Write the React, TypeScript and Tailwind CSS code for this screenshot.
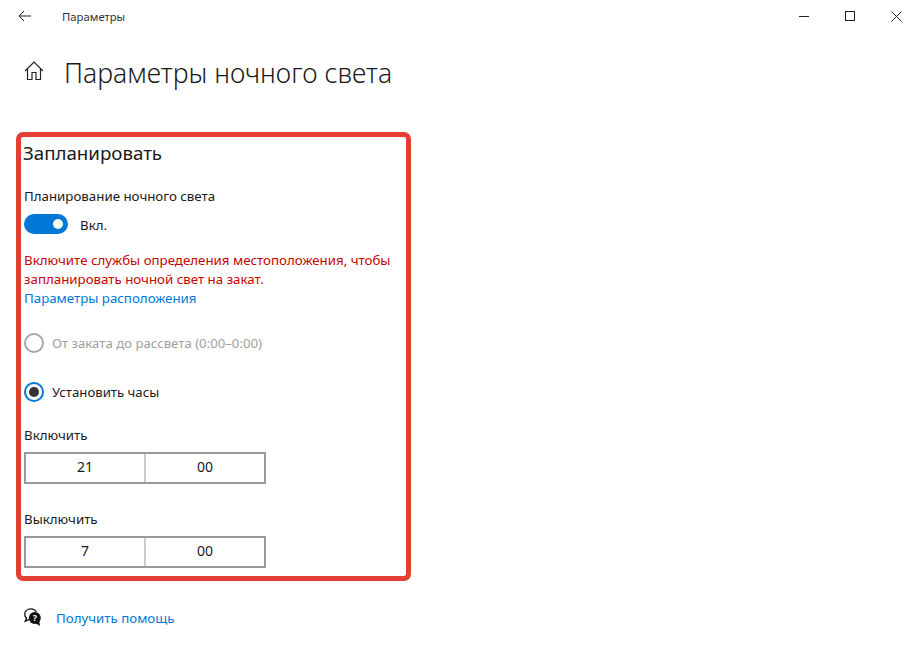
const font = { fontFamily: '"Noto Sans", "Open Sans", sans-serif' };

function TimeBox({ h }: { h: string }) {
  return (
    <div className="flex h-[32px] w-[242px] border-2 border-[#999999] text-[14px] leading-[26px] text-[#1a1a1a]">
      <div className="w-[118px] text-center">{h}</div>
      <div className="w-[2px] bg-[#cccccc]" />
      <div className="flex-1 text-center">00</div>
    </div>
  );
}

function Radio({ on, label }: { on?: boolean; label: string }) {
  return (
    <div className="flex h-[20px] items-center gap-[8px]">
      <div className={`flex h-[20px] w-[20px] items-center justify-center rounded-full border-2 ${on ? "border-[#0078d7]" : "border-[#a6a6a6]"}`}>
        {on && <div className="h-[10px] w-[10px] rounded-full bg-[#333333]" />}
      </div>
      <span className={`mt-[2px] text-[13.2px] ${on ? "text-[#1a1a1a]" : "text-[#a0a0a0]"}`}>{label}</span>
    </div>
  );
}

export default function App() {
  return (
    <div style={font} className="flex h-[662px] w-[919px] flex-col overflow-hidden bg-white text-black">
      <div className="flex h-[32px] items-center justify-between">
        <div className="flex items-center">
          <svg width="13" height="12" viewBox="0 0 13 12" className="ml-[18px]" fill="none" stroke="#222" strokeWidth="1">
            <path d="M13 6H1M6 1L1 6l5 5" />
          </svg>
          <span className="ml-[31px] mt-[3px] text-[11.3px] text-[#333333]">Параметры</span>
        </div>
        <div className="flex items-center">
          <div className="h-px w-[10px] bg-[#222]" />
          <div className="ml-[36px] h-[10px] w-[10px] border border-[#222]" />
          <svg width="11" height="11" viewBox="0 0 11 11" className="ml-[36px] mr-[17px]" stroke="#222" strokeWidth="1">
            <path d="M.5.5l10 10M10.5.5l-10 10" />
          </svg>
        </div>
      </div>

      <div className="mt-[19px] flex h-[40px] items-center">
        <svg width="20" height="20" viewBox="0 0 20 20" className="ml-[24px]" fill="none" stroke="#222" strokeWidth="1.2">
          <path d="M1 10L10 1l9 9M3.5 8v10.5H8v-7h4v7h4.5V8" />
        </svg>
        <h1 className="ml-[20px] mt-[5px] text-[26.6px] font-light text-[#1a1a1a]">Параметры ночного света</h1>
      </div>

      <div className="ml-[16px] mt-[41px] flex h-[449px] w-[395px] flex-col rounded-[7px] border-[5px] border-[#e53e33] pl-[3px]">
        <h2 className="mt-[3px] ml-[-1px] text-[18.7px] leading-[26px] text-[#1a1a1a]">Запланировать</h2>
        <div className="mt-[20px] text-[13.3px] leading-[20px] text-[#1a1a1a]">Планирование ночного света</div>
        <div className="mt-[8px] flex h-[20px] items-center">
          <div className="flex h-[20px] w-[44px] items-center justify-end rounded-full bg-[#0078d7] pr-[5px]">
            <div className="h-[10px] w-[10px] rounded-full bg-white" />
          </div>
          <span className="ml-[12px] mt-[3px] text-[13.3px] text-[#1a1a1a]">Вкл.</span>
        </div>
        <p className="mt-[17px] text-[13.3px] leading-[19px] text-[#c50500]">
          Включите службы определения местоположения, чтобы<br />запланировать ночной свет на закат.
        </p>
        <div className="text-[13.3px] leading-[19px] text-[#0078d7]">Параметры расположения</div>
        <div className="mt-[25px]"><Radio label="От заката до рассвета (0:00–0:00)" /></div>
        <div className="mt-[29px]"><Radio on label="Установить часы" /></div>
        <div className="mt-[23px] text-[13.3px] leading-[20px] text-[#1a1a1a]">Включить</div>
        <div className="mt-[7px]"><TimeBox h="21" /></div>
        <div className="mt-[25px] text-[13.3px] leading-[20px] text-[#1a1a1a]">Выключить</div>
        <div className="mt-[7px]"><TimeBox h="7" /></div>
      </div>

      <div className="ml-[24px] mt-[27px] flex h-[20px] items-center">
        <svg width="17" height="18" viewBox="0 0 17 18" className="mt-[-2px]">
          <path d="M12.4 4C11.4 2 9.3.8 6.8.8 3.3.8.7 3.2.7 6.2c0 1.5.7 2.9 1.8 3.9l-1.3 3.2 4-1.9" fill="none" stroke="#111" strokeWidth="1.3" />
          <circle cx="10.8" cy="10" r="6" fill="#111" />
          <path d="M12 15.5l4 2.5-.8-5z" fill="#111" />
          <text x="10.8" y="13.2" fontSize="9" fontWeight="700" fill="#fff" textAnchor="middle">?</text>
        </svg>
        <span className="ml-[15px] mt-[2px] text-[13.3px] text-[#0078d7]">Получить помощь</span>
      </div>
    </div>
  );
}
